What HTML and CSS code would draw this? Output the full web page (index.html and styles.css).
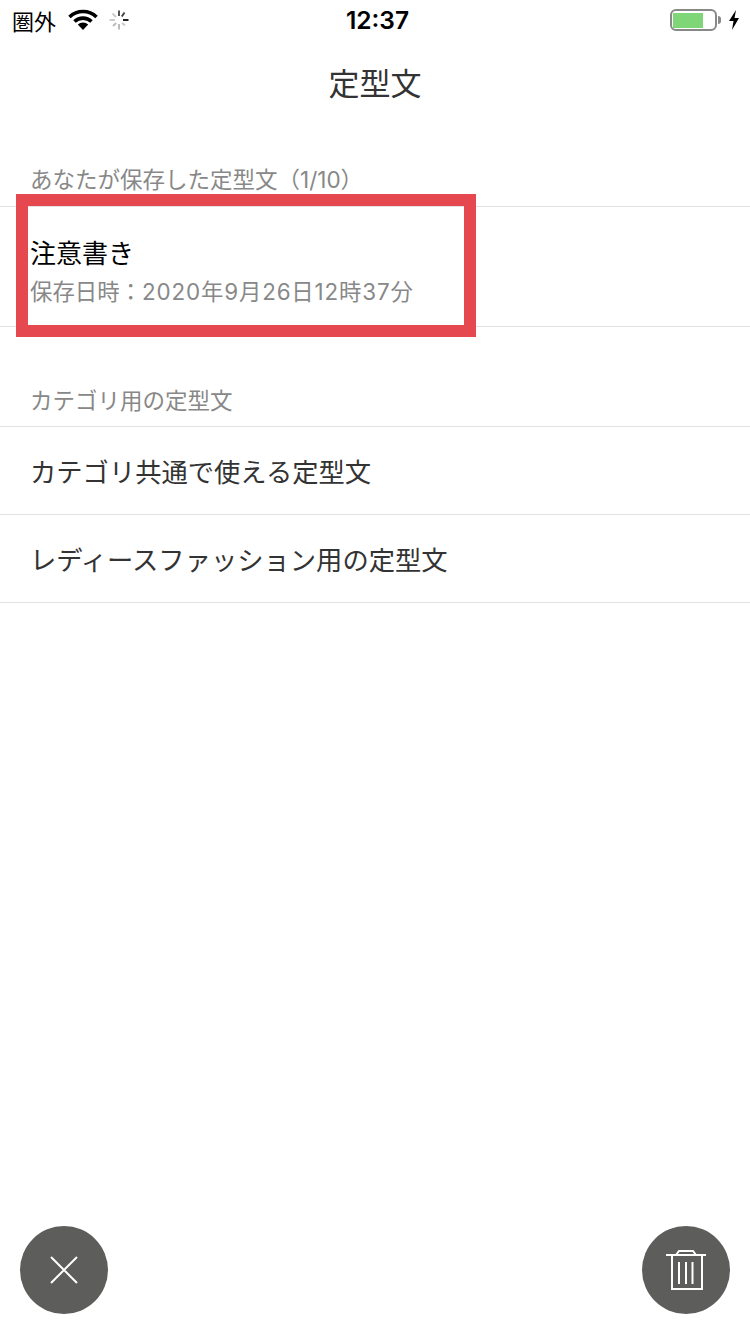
FILE: index.html
```html
<!DOCTYPE html>
<html lang="ja">
<head>
    <meta charset="UTF-8">
    <meta name="viewport" content="width=device-width, initial-scale=1.0">
    <title>定型文</title>
    <link rel="stylesheet" href="styles.css">
</head>
<body>
    <div class="page">
        <div class="status-bar">
            <div class="status-left">
                <span class="carrier">圏外</span>
                <svg class="wifi" width="30" height="22" viewBox="0 0 30 22">
                    <path d="M1.5 8 A19.5 19.5 0 0 1 28.500 8" fill="none" stroke="#000" stroke-width="3.600"/>
                    <path d="M6.500 12.500 A12.500 12.500 0 0 1 23.500 12.500" fill="none" stroke="#000" stroke-width="3.600"/>
                    <path d="M15 21 L9.800 15.600 A7.500 7.500 0 0 1 20.200 15.600 Z" fill="#000"/>
                </svg>
                <svg class="spinner" width="22" height="22" viewBox="0 0 22 22" fill="none" stroke-width="2">
                    <path d="M11 1.500V7" stroke="#555"/>
                    <path d="M16.500 3.500L13.800 7.500" stroke="#444"/>
                    <path d="M20.500 11H15" stroke="#222"/>
                    <path d="M17 16.500L14 14" stroke="#ccc"/>
                    <path d="M11 20.500V15" stroke="#bbb"/>
                    <path d="M5 17L8.200 14" stroke="#bbb"/>
                    <path d="M1.500 11H7" stroke="#ccc"/>
                    <path d="M4.500 4.500L8 8" stroke="#ccc"/>
                </svg>
            </div>
            <div class="clock">12:37</div>
            <div class="status-right">
                <div class="battery"><div class="battery-level"></div></div>
                <div class="battery-cap"></div>
                <svg class="bolt" width="12" height="20" viewBox="0 0 12 20">
                    <path d="M8 0 L1 11 H5.500 L4 20 L11 8 H6.500 Z" fill="#000"/>
                </svg>
            </div>
        </div>

        <h1 class="title">定型文</h1>

        <div class="content">
            <div class="section-label first">あなたが保存した定型文（1/10）</div>
            <div class="row saved">
                <div class="row-name">注意書き</div>
                <div class="row-date">保存日時：<span class="date-value">2020年9月26日12時37分</span></div>
                <div class="highlight"></div>
            </div>

            <div class="section-label">カテゴリ用の定型文</div>
            <div class="row">カテゴリ共通で使える定型文</div>
            <div class="row">レディースファッション用の定型文</div>
        </div>

        <div class="actions">
            <div class="round-btn">
                <svg width="32" height="32" viewBox="0 0 32 32">
                    <path d="M3 3L29 29M29 3L3 29" stroke="#fff" stroke-width="2" fill="none"/>
                </svg>
            </div>
            <div class="round-btn">
                <svg width="42" height="44" viewBox="0 0 42 44" fill="none" stroke="#fff" stroke-width="2">
                    <path d="M1 7H41"/>
                    <path d="M11 7L14 3H28L31 7"/>
                    <path d="M7 7V41H37V7"/>
                    <path d="M14 14V36M21 14V36M27.500 14V36"/>
                </svg>
            </div>
        </div>
    </div>
</body>
</html>
```

FILE: styles.css
```css
* {
    box-sizing: border-box;
}

body {
    margin: 0;
    background-color: #fff;
    font-family: "Inter", "Noto Sans CJK JP", sans-serif;
    color: #333;
}

.page {
    display: flex;
    flex-direction: column;
    height: 1334px;
    overflow: hidden;
}

/* Status bar */
.status-bar {
    display: grid;
    grid-template-columns: 1fr auto 1fr;
    align-items: center;
    height: 40px;
    padding: 0 10px 0 12px;
    color: #000;
}

.status-left {
    display: flex;
    align-items: center;
}

.carrier {
    font-size: 22px;
    margin-right: 12px;
}

.wifi {
    margin-right: 10px;
}

.clock {
    margin-left: 3px;
    font-size: 24.500px;
    font-weight: 600;
}

.status-right {
    display: flex;
    align-items: center;
    justify-content: flex-end;
}

.battery {
    width: 47px;
    height: 22px;
    padding: 1.5px 1px;
    border: 2px solid #888;
    border-radius: 6px;
}

.battery-level {
    width: 30px;
    height: 100%;
    background-color: #7ed676;
}

.battery-cap {
    width: 3px;
    height: 8px;
    margin-left: 1px;
    background-color: #888;
    border-radius: 0 3px 3px 0;
}

.bolt {
    margin-left: 7px;
}

/* Title */
.title {
    margin: 0;
    height: 88px;
    padding-top: 22px;
    text-align: center;
    font-size: 31px;
    font-weight: normal;
    line-height: 44px;
}

/* List */
.content {
    flex: 1;
}

.section-label {
    display: flex;
    align-items: flex-end;
    height: 100px;
    padding: 0 0 9px 30px;
    font-size: 22.500px;
    line-height: 32px;
    color: #888;
    border-bottom: 1px solid #e2e2e2;
}

.section-label.first {
    height: 79px;
    padding-bottom: 10px;
}

.row {
    display: flex;
    align-items: center;
    height: 88px;
    padding-left: 30px;
    font-size: 26.300px;
    border-bottom: 1px solid #e2e2e2;
}

.saved {
    position: relative;
    flex-direction: column;
    align-items: flex-start;
    justify-content: center;
    height: 120px;
    padding-top: 12px;
}

.row-name {
    font-size: 26px;
    line-height: 38px;
    color: #000;
}

.row-date {
    font-size: 22.400px;
    line-height: 38px;
    color: #888;
}

.date-value {
    letter-spacing: 0.850px;
}

/* Red marker drawn over the saved row */
.highlight {
    position: absolute;
    left: 16px;
    top: -13px;
    width: 460px;
    height: 143px;
    border: 12px solid #e5484f;
}

/* Bottom buttons */
.actions {
    display: flex;
    justify-content: space-between;
    padding: 0 20px 20px;
}

.round-btn {
    display: flex;
    align-items: center;
    justify-content: center;
    width: 88px;
    height: 88px;
    border-radius: 50%;
    background-color: #5d5d5b;
}
```
